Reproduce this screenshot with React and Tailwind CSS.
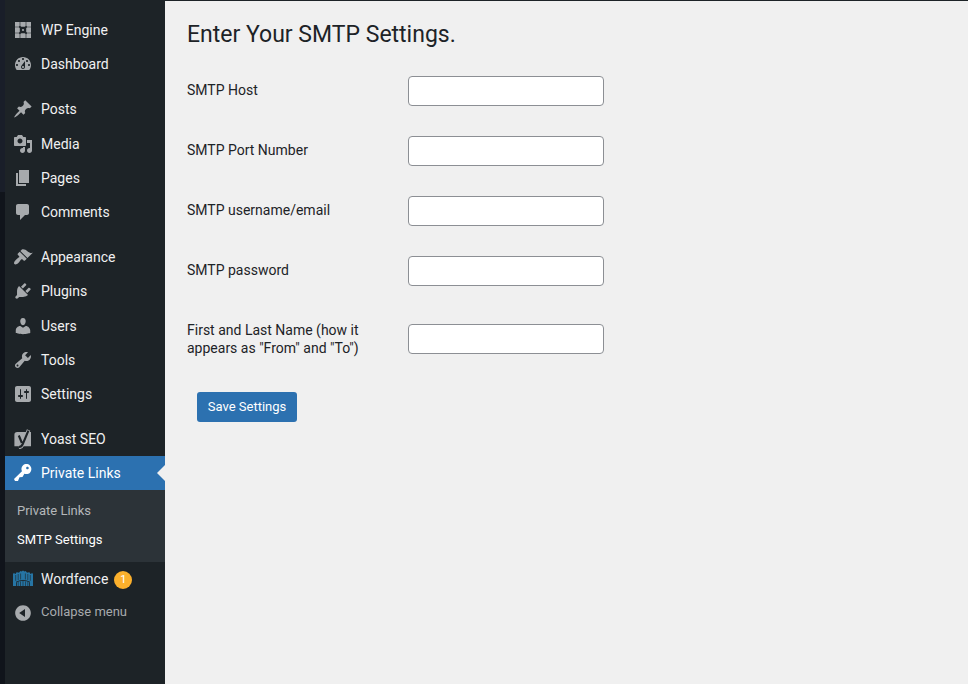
const GREY = "fill-[#a7aaad]";

function Dash({ d, className = GREY }) {
  return (
    <svg viewBox="0 0 20 20" className={`block h-5 w-5 ${className}`}>
      <path d={d} fillRule="evenodd" />
    </svg>
  );
}

const P = {
  dashboard:
    "M3.76 16h12.48c1.1-1.37 1.76-3.11 1.76-5 0-4.42-3.58-8-8-8s-8 3.58-8 8c0 1.89.66 3.63 1.76 5zM10 4c.55 0 1 .45 1 1s-.45 1-1 1-1-.45-1-1 .45-1 1-1zM6 6c.55 0 1 .45 1 1s-.45 1-1 1-1-.45-1-1 .45-1 1-1zm8 0c.55 0 1 .45 1 1s-.45 1-1 1-1-.45-1-1 .45-1 1-1zm-5.37 5.55L12 7v6c0 1.1-.9 2-2 2s-2-.9-2-2c0-.57.24-1.08.63-1.45zM4 10c.55 0 1 .45 1 1s-.45 1-1 1-1-.45-1-1 .45-1 1-1zm12 0c.55 0 1 .45 1 1s-.45 1-1 1-1-.45-1-1 .45-1 1-1zm-5 3c0-.55-.45-1-1-1s-1 .45-1 1 .45 1 1 1 1-.45 1-1z",
  post: "M10.44 3.02l1.82-1.82 6.36 6.35-1.83 1.82c-1.05-.68-2.48-.57-3.41.36l-.75.75c-.92.93-1.04 2.35-.35 3.41l-1.83 1.82-2.41-2.41-2.8 2.79c-.42.42-3.38 2.71-3.8 2.29s1.86-3.39 2.28-3.81l2.79-2.79L4.1 9.36l1.83-1.82c1.05.69 2.48.57 3.4-.36l.75-.75c.93-.92 1.05-2.35.36-3.41z",
  media:
    "M13 11V4c0-.55-.45-1-1-1h-1.67L9 1H5L3.67 3H2c-.55 0-1 .45-1 1v7c0 .55.45 1 1 1h10c.55 0 1-.45 1-1zM7 4.5c1.38 0 2.5 1.12 2.5 2.5S8.38 9.5 7 9.5 4.5 8.38 4.5 7 5.62 4.5 7 4.5zM14 6h5v10.5c0 1.38-1.12 2.5-2.5 2.5S14 17.88 14 16.5s1.12-2.5 2.5-2.5c.17 0 .34.02.5.05V9h-3V6zm-4 8.05V13h2v3.5c0 1.38-1.12 2.5-2.5 2.5S7 17.88 7 16.5 8.12 14 9.5 14c.17 0 .34.02.5.05z",
  page: "M6 15V2h10v13H6zm-1 1h8v2H3V5h2v11z",
  comments:
    "M5 2h9c1.1 0 2 .9 2 2v7c0 1.1-.9 2-2 2h-2l-5 5v-5H5c-1.1 0-2-.9-2-2V4c0-1.1.9-2 2-2z",
  appearance:
    "M14.48 11.06L7.41 3.99l1.5-1.5c.5-.56 2.3-.47 3.51.32 1.21.8 1.43 1.28 2.91 2.1 1.18.64 2.45 1.26 4.45.85zm-.71.71L6.7 4.7 4.93 6.47c-.39.39-.39 1.02 0 1.41l1.06 1.06c.39.39.39 1.03 0 1.42-.6.6-1.43 1.11-2.21 1.69-.35.26-.7.53-1.01.84C1.43 14.23.4 16.08 1.4 17.07c.99 1 2.84-.03 4.18-1.36.31-.31.58-.66.85-1.02.57-.78 1.08-1.61 1.69-2.21.39-.39 1.02-.39 1.41 0l1.06 1.06c.39.39 1.02.39 1.41 0z",
  plugins:
    "M13.11 4.36L9.87 7.6 8 5.73l3.24-3.24c.35-.34 1.05-.2 1.56.32.52.51.66 1.21.31 1.55zm-8 1.77l.91-1.12 9.01 9.01-1.19.84c-.71.71-2.63 1.16-3.82 1.16H6.14L4.9 17.26c-.59.59-1.54.59-2.12 0-.59-.58-.59-1.53 0-2.12l1.24-1.24v-3.88c0-1.13.4-3.19 1.09-3.89zm7.26 3.97l3.24-3.24c.34-.35 1.04-.21 1.55.31.52.51.66 1.21.31 1.55l-3.24 3.25z",
  users:
    "M10 9.25c-2.27 0-2.73-3.44-2.73-3.44C7 4.02 7.82 2 9.97 2c2.16 0 2.98 2.02 2.71 3.81 0 0-.41 3.44-2.68 3.44zm0 2.57L12.72 10c2.39 0 4.52 2.33 4.52 4.53v2.49s-3.65 1.13-7.24 1.13c-3.65 0-7.24-1.13-7.24-1.13v-2.49c0-2.25 1.94-4.48 4.47-4.48z",
  tools:
    "M16.68 9.77c-1.34 1.34-3.3 1.67-4.95.99l-5.41 6.52c-.99.99-2.59.99-3.58 0s-.99-2.59 0-3.57l6.52-5.42c-.68-1.65-.35-3.61.99-4.95 1.28-1.28 3.12-1.62 4.72-1.06l-2.89 2.89 2.82 2.82 2.86-2.87c.53 1.58.18 3.39-1.08 4.65zM3.81 16.21c.4.39 1.04.39 1.43 0 .4-.4.4-1.04 0-1.43-.39-.4-1.03-.4-1.43 0-.39.39-.39 1.03 0 1.43z",
  settings:
    "M18 16V4c0-1.1-.9-2-2-2H4c-1.1 0-2 .9-2 2v12c0 1.1.9 2 2 2h12c1.1 0 2-.9 2-2zM8 11h1c.55 0 1 .45 1 1s-.45 1-1 1H8v1.5c0 .28-.22.5-.5.5s-.5-.22-.5-.5V13H6c-.55 0-1-.45-1-1s.45-1 1-1h1V5.5c0-.28.22-.5.5-.5s.5.22.5.5V11zm5-2h-1c-.55 0-1-.45-1-1s.45-1 1-1h1V5.5c0-.28.22-.5.5-.5s.5.22.5.5V7h1c.55 0 1 .45 1 1s-.45 1-1 1h-1v5.5c0 .28-.22.5-.5.5s-.5-.22-.5-.5V9z",
  key: "M16.95 2.58c1.96 1.95 1.96 5.12 0 7.07-1.51 1.51-3.75 1.84-5.59 1.01l-1.87 3.31-2.99.31L5 18H2l-1-2 7.95-7.69c-.92-1.87-.62-4.18.93-5.73 1.95-1.96 5.12-1.96 7.07 0zm-2.51 3.79c.74 0 1.33-.6 1.33-1.34 0-.73-.59-1.33-1.33-1.33-.73 0-1.33.6-1.33 1.33 0 .74.6 1.34 1.33 1.34z",
  collapse:
    "M10 2.16c4.33 0 7.84 3.51 7.84 7.84s-3.51 7.84-7.84 7.84S2.16 14.33 2.16 10 5.71 2.16 10 2.16zm2 11.72V6.12L6.18 9.97z",
};

function WpEngine() {
  return (
    <svg viewBox="0 0 20 20" className="block h-5 w-5 fill-[#a7aaad]">
      <path d="M2 2h4.700v3.800L5.800 6.700H2zM7.300 2h5.400v3.900l-1 .9H8.300l-1-.9zM13.300 2H18v4.700h-3.800l-.9-.9zM2 7.300h3.900l.9 1v3.400l-.9 1H2zM18 7.300h-3.900l-.9 1v3.400l.9 1H18zM2 13.300h3.800l.9.9V18H2zM7.300 18v-3.900l1-.9h3.400l1 .9V18zM13.300 18v-3.800l.9-.9H18V18z" />
      <circle cx="10" cy="10" r="1.100" />
    </svg>
  );
}

function Yoast() {
  return (
    <svg viewBox="0 0 20 20" className="block h-5 w-5">
      <path d="M4.200 3h13.800v14.200H1.400V5.800A2.800 2.800 0 0 1 4.200 3z" className="fill-[#a7aaad]" />
      <path d="M15.600 1L9.800 15.300c-.9 2.100-1.900 3-3.900 3.100" fill="none" strokeWidth="3.600" className="stroke-[#a7aaad]" />
      <path d="M5.800 6.500L8.900 14M15.400 1.600L9.800 15c-.9 2-1.800 2.900-3.800 3.100" fill="none" strokeWidth="2.100" className="stroke-[#1d2327]" />
    </svg>
  );
}

function Wordfence() {
  return (
    <svg viewBox="0 0 20 20" className="block h-5 w-5">
      <path d="M0 5l1-1.200L2 5l1-.5V4l1-1 1 .8 1.500-.6V3l1-1 1 .5L10 1.400l1.500 1.100 1-.5 1 1v.2l1.500.6 1-.8 1 1v.5l1 .5 1-1.200 1 1.200v12h-3.200v-3.400h-.8v3.400H4v-3.400h-.8V17H0z" className="fill-[#2675a5]" />
      <path d="M2.700 6v5.800M5.200 5v6M7.600 4.500v6M12.400 4.500v6M14.800 5v6M17.300 6v5.800M10 11.500V17M7.500 12.500V17M12.500 12.500V17M5.200 13v4M14.800 13v4" fill="none" strokeWidth=".6" className="stroke-[#1d2327]" />
      <path d="M3 13.200Q10 9.600 17 13.200" fill="none" strokeWidth=".9" className="stroke-[#1d2327]" />
    </svg>
  );
}

function Item({ icon, label, active = false, badge }) {
  return (
    <li className={`relative flex h-[34.2px] w-40 text-sm leading-[18.2px] ${active ? "bg-[#2c71b0] text-white" : "text-[#f0f0f1]"}`}>
      <span className="flex w-9 justify-center pt-[7px]">{icon}</span>
      <span className="py-2">{label}</span>
      {badge && (
        <span className="mt-[9px] ml-1.5 flex h-[18px] w-[18px] items-center justify-center rounded-full bg-[#fcb02c] text-[11px] leading-none text-white">
          {badge}
        </span>
      )}
      {active && (
        <span className="absolute top-[9px] right-0 h-0 w-0 border-y-8 border-r-8 border-y-transparent border-r-[#f0f0f0]" />
      )}
    </li>
  );
}

function Sidebar() {
  return (
    <nav className="w-40 shrink-0 bg-[#1d2327] pt-[13.05px]">
      <ul>
        <Item icon={<WpEngine />} label="WP Engine" />
        <Item icon={<Dash d={P.dashboard} />} label="Dashboard" />
        <li className="h-[11px]" />
        <Item icon={<Dash d={P.post} />} label="Posts" />
        <Item icon={<Dash d={P.media} />} label="Media" />
        <Item icon={<Dash d={P.page} />} label="Pages" />
        <Item icon={<Dash d={P.comments} />} label="Comments" />
        <li className="h-[11px]" />
        <Item icon={<Dash d={P.appearance} />} label="Appearance" />
        <Item icon={<Dash d={P.plugins} />} label="Plugins" />
        <Item icon={<Dash d={P.users} />} label="Users" />
        <Item icon={<Dash d={P.tools} />} label="Tools" />
        <Item icon={<Dash d={P.settings} />} label="Settings" />
        <li className="h-[11px]" />
        <Item icon={<Yoast />} label="Yoast SEO" />
        <Item active icon={<Dash d={P.key} className="fill-white" />} label="Private Links" />
        <li>
          <ul className="bg-[#2c3338] pt-[7px] pb-2 text-[13px] leading-[18.2px]">
            <li className="px-3 py-[5px] text-[#b4b7ba]">Private Links</li>
            <li className="px-3 py-[5px] text-white">SMTP Settings</li>
          </ul>
        </li>
        <Item icon={<Wordfence />} label="Wordfence" badge="1" />
        <li className="flex h-[34px] text-[13px] leading-[18px] text-[#a7aaad]">
          <span className="flex w-9 justify-center pt-[7px]">
            <Dash d={P.collapse} />
          </span>
          <span className="pt-[7px]">Collapse menu</span>
        </li>
      </ul>
    </nav>
  );
}

function Field({ label, tall = false }) {
  return (
    <div className={`flex items-center ${tall ? "h-[76px]" : "h-[60px]"}`}>
      <label className={`w-[221px] pr-[30px] text-sm leading-[18.2px] ${tall ? "" : "pb-px"}`}>{label}</label>
      <input type="text" className="h-[30px] w-[196px] rounded border border-[#8c8f94] bg-white px-2" />
    </div>
  );
}

export default function App() {
  return (
    <div className="flex h-[684px] w-[968px] overflow-hidden bg-[#f0f0f0] font-['Roboto',sans-serif] text-[#1d2327]">
      <div className="w-[5px] shrink-0 bg-linear-to-b from-[#191e29] from-28% to-[#10141b] to-28%" />
      <Sidebar />
      <main className="flex-1 border-t border-[#1d2327] pl-[22px]">
        <h1 className="mt-[19px] text-[23px] leading-[30px]">Enter Your SMTP Settings.</h1>
        <form className="mt-[11px]">
          <Field label="SMTP Host" />
          <Field label="SMTP Port Number" />
          <Field label="SMTP username/email" />
          <Field label="SMTP password" />
          <Field tall label={'First and Last Name (how it appears as "From" and "To")'} />
          <button
            type="button"
            className="mt-[15px] ml-2.5 block h-[30px] w-[100px] rounded-[3px] bg-[#2c71b0] text-[13px] leading-[28px] whitespace-nowrap text-white"
          >
            Save Settings
          </button>
        </form>
      </main>
    </div>
  );
}
